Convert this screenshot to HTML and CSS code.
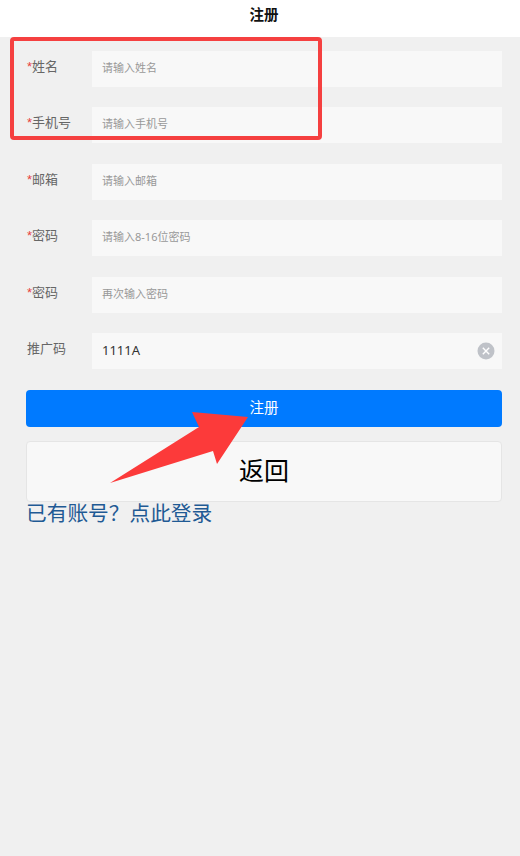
FILE: index.html
```html
<!DOCTYPE html>
<html lang="zh-CN">
<head>
    <meta charset="UTF-8">
    <meta name="viewport" content="width=device-width, initial-scale=1.0">
    <title>注册</title>
    <link rel="stylesheet" href="styles.css">
</head>
<body>
    <header class="top-bar">注册</header>

    <form class="register-form">
        <div class="form-row">
            <label class="label"><span class="required">*</span>姓名</label>
            <div class="field"><span class="placeholder">请输入姓名</span></div>
        </div>
        <div class="form-row">
            <label class="label"><span class="required">*</span>手机号</label>
            <div class="field"><span class="placeholder">请输入手机号</span></div>
        </div>
        <div class="form-row">
            <label class="label"><span class="required">*</span>邮箱</label>
            <div class="field"><span class="placeholder">请输入邮箱</span></div>
        </div>
        <div class="form-row">
            <label class="label"><span class="required">*</span>密码</label>
            <div class="field"><span class="placeholder">请输入8-16位密码</span></div>
        </div>
        <div class="form-row">
            <label class="label"><span class="required">*</span>密码</label>
            <div class="field"><span class="placeholder">再次输入密码</span></div>
        </div>
        <div class="form-row">
            <label class="label">推广码</label>
            <div class="field">
                <span class="value">1111A</span>
                <svg class="clear-icon" viewBox="0 0 18 18" width="18" height="18">
                    <circle cx="9" cy="9" r="8.5" fill="#bfc2c8"/>
                    <path d="M5.8 5.8l6.4 6.4M12.2 5.8l-6.4 6.4" stroke="#fff" stroke-width="1.4" fill="none"/>
                </svg>
            </div>
        </div>

        <div class="submit-button">注册</div>
        <div class="back-button">返回</div>
        <a class="login-link">已有账号？点此登录</a>
    </form>

    <!-- red markup drawn over the screenshot -->
    <div class="mark-box"></div>
    <svg class="mark-arrow" viewBox="0 0 520 856" width="520" height="856">
        <polygon points="110,483 199,427 192,412 248,417 217,464 213,451" fill="#fc3a3a"/>
    </svg>
</body>
</html>
```

FILE: styles.css
```css
* {
    box-sizing: border-box;
}

html, body {
    height: 100%;
}

body {
    margin: 0;
    position: relative;
    overflow: hidden;
    background-color: #f0f0f0;
    font-family: "Noto Sans", "Noto Sans CJK SC", sans-serif;
}

.top-bar {
    height: 37px;
    line-height: 29px;
    padding-left: 8px;
    text-align: center;
    font-size: 14.5px;
    font-weight: bold;
    color: #111;
    background-color: #fff;
}

.register-form {
    padding: 14px 18px 0 26px;
}

.form-row {
    display: flex;
    align-items: center;
    height: 36px;
    margin-bottom: 20.4px;
}

.label {
    width: 66px;
    flex-shrink: 0;
    margin-top: -7px;
    padding-left: 1px;
    font-size: 13px;
    color: #666;
}

.required {
    font-family: "Liberation Sans", sans-serif;
    color: #e8413c;
}

.field {
    flex: 1;
    height: 36px;
    display: flex;
    align-items: center;
    justify-content: space-between;
    padding: 0 7px 0 10px;
    background-color: #f8f8f8;
}

.placeholder {
    margin-top: -4px;
    font-size: 11px;
    color: #999;
}

.value {
    margin-top: -2px;
    font-size: 13px;
    color: #333;
}

.submit-button {
    height: 37px;
    line-height: 35px;
    margin-top: 21px;
    text-align: center;
    font-size: 14.5px;
    color: #fff;
    background-color: #007aff;
    border-radius: 4px;
}

.back-button {
    height: 61px;
    line-height: 56px;
    margin-top: 14px;
    text-align: center;
    font-size: 25px;
    color: #000;
    background-color: #f8f8f8;
    border: 1px solid #e5e5e5;
    border-radius: 4px;
}

.login-link {
    display: block;
    font-size: 20.7px;
    line-height: 22px;
    color: #1f5a94;
}

.mark-box {
    position: absolute;
    left: 10px;
    top: 37px;
    width: 312px;
    height: 103px;
    border: 4px solid #f54040;
    border-radius: 4px;
}

.mark-arrow {
    position: absolute;
    left: 0;
    top: 0;
}
```
